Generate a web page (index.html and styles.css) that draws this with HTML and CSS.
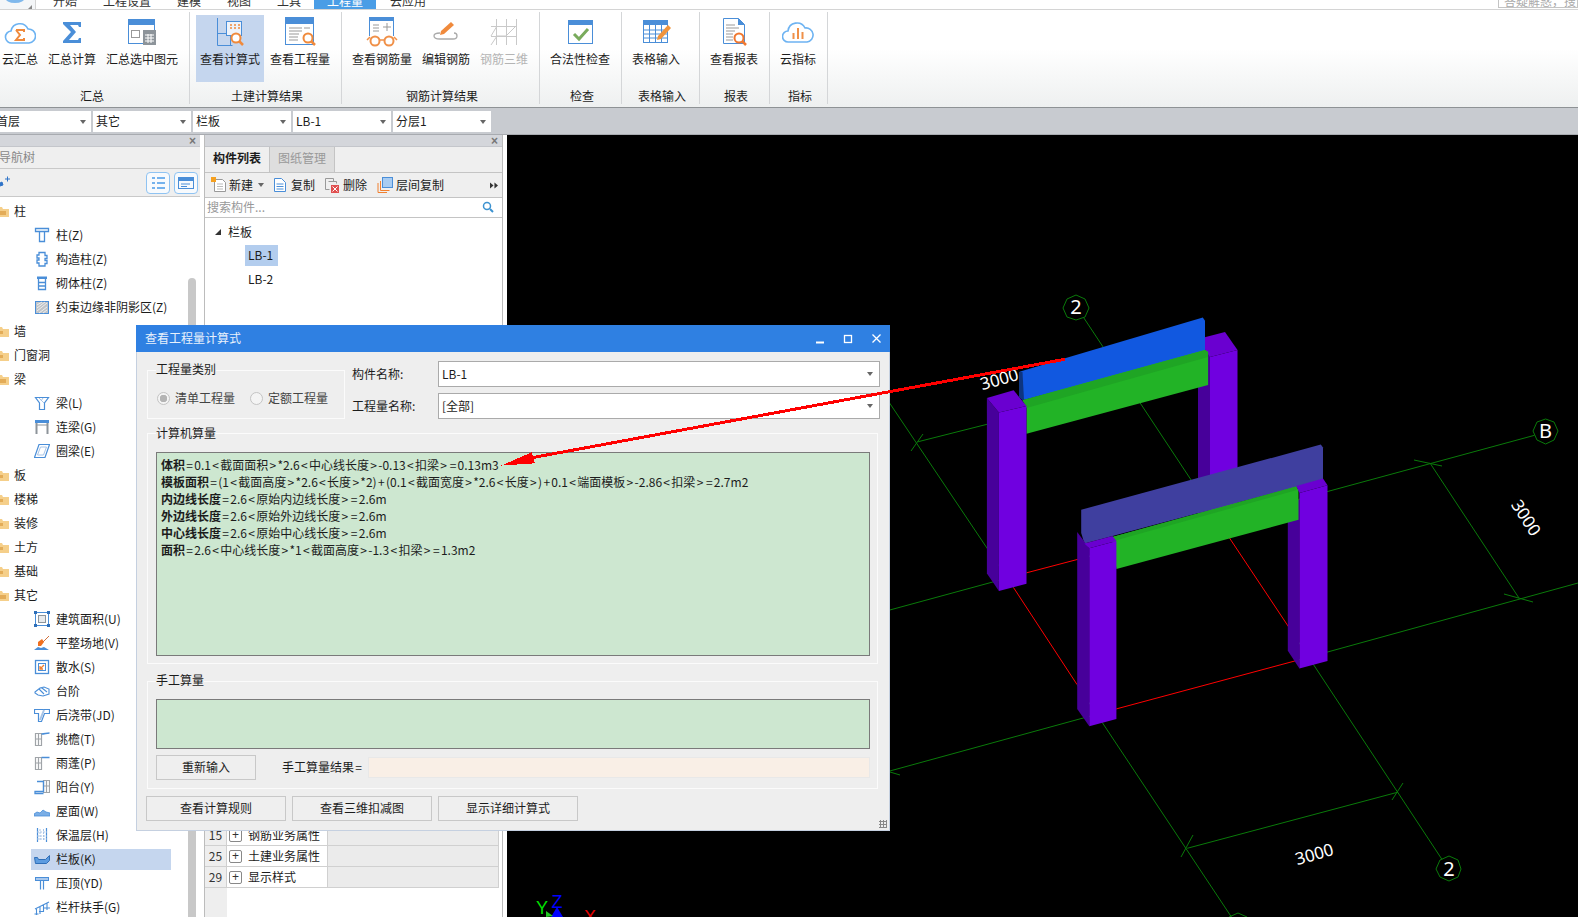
FILE: index.html
```html
<!DOCTYPE html>
<html lang="zh-CN">
<head>
<meta charset="utf-8">
<title>查看工程量计算式</title>
<link rel="stylesheet" href="styles.css">
</head>
<body>
<div class="app">
  <div class="tabbar">
    <div class="logo"><span class="logo-blob"></span><span class="logo-tri"></span></div>
    <span class="tab">开始</span><span class="tab">工程设置</span><span class="tab">建模</span><span class="tab">视图</span><span class="tab">工具</span><span class="tab tab-on">工程量</span><span class="tab">云应用</span>
    <span class="ask">答疑解惑，搜索</span>
  </div>

  <div class="ribbon">
    <section class="rgroup g1">
      <div class="rbtns">
        <div class="rbtn"><svg class="i32" viewBox="0 0 32 32"><path d="M8 27a6 6 0 0 1-1-12 9 9 0 0 1 17-2 7 7 0 0 1 1 14z" fill="#fff" stroke="#6db3f2" stroke-width="1.6"/><path d="M12 14h8v2M12 14l4 5-4 5h8v-2" fill="none" stroke="#f08a3c" stroke-width="2"/></svg><span>云汇总</span></div>
        <div class="rbtn"><svg class="i32" viewBox="0 0 32 32"><path d="M7 6h18v5h-2l-1-2H14l6 7-7 8h9l1-2h2v5H7v-2l8-9-8-8z" fill="#4a8ed8"/></svg><span>汇总计算</span></div>
        <div class="rbtn"><svg class="i32" viewBox="0 0 32 32"><rect x="2.500" y="3.500" width="26" height="24" fill="#fff" stroke="#4a8ed8"/><rect x="2" y="3" width="27" height="6" fill="#4a8ed8"/><rect x="5.500" y="14.500" width="8" height="7" fill="none" stroke="#999"/><rect x="17" y="14" width="13" height="15" fill="#8d949a"/><path d="M19 19h9M19 22h9M19 25h9M22 18v9M25 18v9" stroke="#fff"/></svg><span>汇总选中图元</span></div>
      </div>
      <div class="rlabel">汇总</div>
    </section>
    <section class="rgroup g2">
      <div class="rbtns">
        <div class="rbtn rbtn-on"><svg class="i32" viewBox="0 0 32 32"><path d="M3.500 2v27.500h15M3.500 17.500h13v12" fill="none" stroke="#4a8ed8"/><rect x="12.500" y="5.500" width="15" height="14" fill="#eef3fa" stroke="#4a8ed8"/><path d="M16 9h2M20 9h2M24 9h2M16 12h2M20 12h2M24 12h2" stroke="#f08a3c" stroke-width="1.500"/><circle cx="22" cy="22" r="4.500" fill="#fff" stroke="#f08a3c" stroke-width="2"/><path d="M25 25l4 4" stroke="#f08a3c" stroke-width="2.500"/></svg><span>查看计算式</span></div>
        <div class="rbtn"><svg class="i32" viewBox="0 0 32 32"><rect x="1.500" y="2.500" width="28" height="26" fill="#fff" stroke="#4a8ed8"/><rect x="1" y="1" width="29" height="7" fill="#4a8ed8"/><path d="M5 12h13M5 15h13M5 18h10M5 21h9M5 24h9M20 12h6" stroke="#999"/><circle cx="24" cy="22" r="4.500" fill="#fff" stroke="#f08a3c" stroke-width="2"/><path d="M27 25l4 4" stroke="#f08a3c" stroke-width="2.500"/></svg><span>查看工程量</span></div>
      </div>
      <div class="rlabel">土建计算结果</div>
    </section>
    <section class="rgroup g3">
      <div class="rbtns">
        <div class="rbtn"><svg class="i32" viewBox="0 0 32 32"><path d="M3.500 20V3.500h24V20" fill="#fff" stroke="#4a8ed8"/><rect x="3" y="1" width="25" height="4" fill="#4a8ed8"/><path d="M7 9h6M7 12h6M7 15h6M17 11h8M21 7v8" stroke="#999"/><circle cx="9" cy="25" r="4.500" fill="#fff" stroke="#f09048" stroke-width="2"/><circle cx="23" cy="25" r="4.500" fill="#fff" stroke="#f09048" stroke-width="2"/><path d="M13 24h6M1 24l3-3M31 24l-3-3" stroke="#f09048" stroke-width="1.500"/></svg><span>查看钢筋量</span></div>
        <div class="rbtn"><svg class="i32" viewBox="0 0 32 32"><path d="M11 15l10-9 3 3-10 9-4 1z" fill="#f08a3c"/><path d="M10 17c-4 0-6 1-6 3s2 3 6 3h13c2 0 4-1 4-3s-1-3-3-3" fill="none" stroke="#aaa" stroke-width="1.300"/></svg><span>编辑钢筋</span></div>
        <div class="rbtn rbtn-off"><svg class="i32" viewBox="0 0 32 32"><path d="M8.500 3v26M18.500 3v26M28.500 3v26M3 10.500h26M3 20.500h26M3 29l6-9 9 0 10-10M3 20l6-10" fill="none" stroke="#c9c9c9"/></svg><span>钢筋三维</span></div>
      </div>
      <div class="rlabel">钢筋计算结果</div>
    </section>
    <section class="rgroup g4">
      <div class="rbtns">
        <div class="rbtn"><svg class="i32" viewBox="0 0 32 32"><rect x="4.500" y="5.500" width="24" height="22" fill="#fff" stroke="#4a8ed8"/><rect x="4" y="4" width="25" height="5" fill="#4a8ed8"/><path d="M10 18l5 5 9-10" fill="none" stroke="#79ab5c" stroke-width="3"/></svg><span>合法性检查</span></div>
      </div>
      <div class="rlabel">检查</div>
    </section>
    <section class="rgroup g5">
      <div class="rbtns">
        <div class="rbtn"><svg class="i32" viewBox="0 0 32 32"><rect x="3.500" y="4.500" width="24" height="22" fill="#fff" stroke="#4a8ed8"/><rect x="3" y="4" width="25" height="5" fill="#4a8ed8"/><path d="M3 14h25M3 18h25M3 22h25M9.500 9v18M15.500 9v18M21.500 9v18" stroke="#4a8ed8"/><path d="M18 20l10-11 3 3-10 11-4 1z" fill="#f0943c"/></svg><span>表格输入</span></div>
      </div>
      <div class="rlabel">表格输入</div>
    </section>
    <section class="rgroup g6">
      <div class="rbtns">
        <div class="rbtn"><svg class="i32" viewBox="0 0 32 32"><path d="M5.500 2.500h15l6 6v19h-21z" fill="#fff" stroke="#4a8ed8"/><path d="M20 2l7 7h-7z" fill="#4a8ed8"/><path d="M8 9h9M8 12h13M8 15h9M8 18h7M8 21h7M8 24h7" stroke="#999"/><circle cx="21" cy="22" r="4.500" fill="#fff" stroke="#f07830" stroke-width="2"/><path d="M24 25l4 4" stroke="#f07830" stroke-width="2.500"/></svg><span>查看报表</span></div>
      </div>
      <div class="rlabel">报表</div>
    </section>
    <section class="rgroup g7">
      <div class="rbtns">
        <div class="rbtn"><svg class="i32" viewBox="0 0 32 32"><path d="M6 26a5.500 5.500 0 0 1 0-11 9 9 0 0 1 17-3 7 7 0 0 1 2 14z" fill="#fff" stroke="#6db3f2" stroke-width="1.600"/><path d="M11.500 17v6M16 12v11M20.500 16v7" stroke="#f09048" stroke-width="2"/></svg><span>云指标</span></div>
      </div>
      <div class="rlabel">指标</div>
    </section>
  </div>

  <div class="combobar">
    <div class="combo combo-first"><span>首层</span></div>
    <div class="combo"><span>其它</span></div>
    <div class="combo"><span>栏板</span></div>
    <div class="combo"><span>LB-1</span></div>
    <div class="combo"><span>分层1</span></div>
  </div>

  <div class="main">
    <aside class="nav">
      <div class="phead"><span class="pclose">×</span></div>
      <div class="nav-title"><span>导航树</span></div>
      <div class="nav-tools">
        <svg class="pin" viewBox="0 0 12 12"><path d="M0 8l4-2 1 3-3 1zM7 3h5M9.500 0.500v5" fill="#2f74c8" stroke="#2f74c8"/></svg>
        <span class="toolbtn"><svg class="i16" viewBox="0 0 16 16"><path d="M2 3h3M2 8h3M2 13h3M7 3h8M7 8h8M7 13h8" stroke="#4a9be8" stroke-width="1.500"/></svg></span>
        <span class="toolbtn"><svg class="i16" viewBox="0 0 16 16"><rect x="0.500" y="2.500" width="15" height="11" fill="none" stroke="#4a8ed8"/><rect x="0" y="2" width="16" height="4" fill="#4a8ed8"/><path d="M3 9h9M3 11.500h6" stroke="#4a8ed8"/></svg></span>
      </div>
      <div class="nav-tree">
        <div class="row l1"><svg class="folder" viewBox="0 0 12 11"><path d="M0 1h5l1 2h6v8H0z" fill="#f5cf8a"/><path d="M0 5h9v4H0z" fill="#e3ac58"/></svg><span>柱</span></div>
        <div class="row l2"><svg class="i16" viewBox="0 0 16 16"><path d="M1.500 1.500h13v3h-13zM5.500 4.500v10h5v-10" fill="none" stroke="#4a8ed8" stroke-width="1.300"/></svg><span>柱(Z)</span></div>
        <div class="row l2"><svg class="i16" viewBox="0 0 16 16"><path d="M5 1.500h6v3h2v3h-2v2h2v3h-2v2.500H5V12H3V9h2V7H3V4h2z" fill="none" stroke="#4a8ed8" stroke-width="1.300"/></svg><span>构造柱(Z)</span></div>
        <div class="row l2"><svg class="i16" viewBox="0 0 16 16"><path d="M3 1.500h10v2.500H3z" fill="#4a8ed8"/><path d="M4.500 4v10.500h7V4M4.500 7.500h7M4.500 11h7" fill="none" stroke="#4a8ed8" stroke-width="1.300"/></svg><span>砌体柱(Z)</span></div>
        <div class="row l2"><svg class="i16" viewBox="0 0 16 16"><rect x="1.500" y="2.500" width="13" height="12" fill="#c0c4c8" stroke="#4a8ed8"/><path d="M3 6l5-3M3 9l8-6M3 12l10-8M5 14l8-6M9 14l4-3" stroke="#eee"/></svg><span>约束边缘非阴影区(Z)</span></div>
        <div class="row l1"><svg class="folder" viewBox="0 0 12 11"><path d="M0 1h5l1 2h6v8H0z" fill="#f5cf8a"/><path d="M0 5h6v3H0z" fill="#e3ac58"/></svg><span>墙</span></div>
        <div class="row l1"><svg class="folder" viewBox="0 0 12 11"><path d="M0 1h5l1 2h6v8H0z" fill="#f5cf8a"/><path d="M0 5h6v3H0z" fill="#e3ac58"/></svg><span>门窗洞</span></div>
        <div class="row l1"><svg class="folder" viewBox="0 0 12 11"><path d="M0 1h5l1 2h6v8H0z" fill="#f5cf8a"/><path d="M0 5h9v4H0z" fill="#e3ac58"/></svg><span>梁</span></div>
        <div class="row l2"><svg class="i16" viewBox="0 0 16 16"><path d="M1.500 2.500h13l-4 5.500v6.500h-5V8z" fill="none" stroke="#4a8ed8" stroke-width="1.200"/><path d="M5 3l5 5M9 3l-2 3" stroke="#a8c4e6"/></svg><span>梁(L)</span></div>
        <div class="row l2"><svg class="i16" viewBox="0 0 16 16"><rect x="1" y="1" width="14" height="3" fill="#4a8ed8"/><path d="M2.500 4v11M13.500 4v11" stroke="#8d949a" stroke-width="2"/><path d="M2 6h12" stroke="#8d949a"/></svg><span>连梁(G)</span></div>
        <div class="row l2"><svg class="i16" viewBox="0 0 16 16"><path d="M5 1.500h10.500L11 14.500H0.500z" fill="none" stroke="#4a8ed8" stroke-width="1.200"/><path d="M6.500 4h6L9.500 12h-6z" fill="none" stroke="#a8c4e6"/></svg><span>圈梁(E)</span></div>
        <div class="row l1"><svg class="folder" viewBox="0 0 12 11"><path d="M0 1h5l1 2h6v8H0z" fill="#f5cf8a"/><path d="M0 5h6v3H0z" fill="#e3ac58"/></svg><span>板</span></div>
        <div class="row l1"><svg class="folder" viewBox="0 0 12 11"><path d="M0 1h5l1 2h6v8H0z" fill="#f5cf8a"/><path d="M0 5h6v3H0z" fill="#e3ac58"/></svg><span>楼梯</span></div>
        <div class="row l1"><svg class="folder" viewBox="0 0 12 11"><path d="M0 1h5l1 2h6v8H0z" fill="#f5cf8a"/><path d="M0 5h6v3H0z" fill="#e3ac58"/></svg><span>装修</span></div>
        <div class="row l1"><svg class="folder" viewBox="0 0 12 11"><path d="M0 1h5l1 2h6v8H0z" fill="#f5cf8a"/><path d="M0 5h6v3H0z" fill="#e3ac58"/></svg><span>土方</span></div>
        <div class="row l1"><svg class="folder" viewBox="0 0 12 11"><path d="M0 1h5l1 2h6v8H0z" fill="#f5cf8a"/><path d="M0 5h6v3H0z" fill="#e3ac58"/></svg><span>基础</span></div>
        <div class="row l1"><svg class="folder" viewBox="0 0 12 11"><path d="M0 1h5l1 2h6v8H0z" fill="#f5cf8a"/><path d="M0 5h9v4H0z" fill="#e3ac58"/></svg><span>其它</span></div>
        <div class="row l2"><svg class="i16" viewBox="0 0 16 16"><rect x="1.500" y="1.500" width="13" height="13" fill="none" stroke="#4a8ed8"/><rect x="4.500" y="4.500" width="7" height="7" fill="#e8eaec" stroke="#8d949a"/><path d="M0 0h3v3H0zM13 0h3v3h-3zM0 13h3v3H0zM13 13h3v3h-3z" fill="#2f6fb8"/></svg><span>建筑面积(U)</span></div>
        <div class="row l2"><svg class="i16" viewBox="0 0 16 16"><path d="M15 1L8 8" stroke="#d0703c"/><path d="M4 7l4-3 2 3-3 4-3 0z" fill="#f07020"/><path d="M0 15l4-3 3 1 3-1 5 3z" fill="#4a8ed8"/></svg><span>平整场地(V)</span></div>
        <div class="row l2"><svg class="i16" viewBox="0 0 16 16"><rect x="1.500" y="1.500" width="13" height="13" fill="none" stroke="#4a8ed8" stroke-width="1.300"/><rect x="4.500" y="4.500" width="7" height="7" fill="none" stroke="#4a8ed8"/><path d="M10 6L6 10M6 7v3h3" fill="none" stroke="#f08030" stroke-width="1.300"/></svg><span>散水(S)</span></div>
        <div class="row l2"><svg class="i16" viewBox="0 0 16 16"><path d="M1 9l5-4 4-1 5 2v5l-6 2-5-1-3-2zM5 6l5 5M8 5l5 4" fill="none" stroke="#4a8ed8" stroke-width="1.100"/></svg><span>台阶</span></div>
        <div class="row l2"><svg class="i16" viewBox="0 0 16 16"><path d="M0.500 2.500h15v4h-5l-3 8h-3V6.500H0.500z" fill="none" stroke="#4a8ed8" stroke-width="1.200"/><path d="M10 3L6 13" stroke="#a8c4e6" stroke-width="2"/></svg><span>后浇带(JD)</span></div>
        <div class="row l2"><svg class="i16" viewBox="0 0 16 16"><path d="M1.500 2.500h6v12h-6zM1.500 8h6M4.500 2.500v12" fill="none" stroke="#a0a4a8" stroke-width="1.200"/><path d="M7.500 3c3 0 5-1 8-1" fill="none" stroke="#4a8ed8" stroke-width="1.300"/></svg><span>挑檐(T)</span></div>
        <div class="row l2"><svg class="i16" viewBox="0 0 16 16"><path d="M1.500 2.500h6v12h-6zM1.500 8h6M4.500 2.500v12" fill="none" stroke="#a0a4a8" stroke-width="1.200"/><path d="M7.500 2.500h8" stroke="#4a8ed8" stroke-width="1.500"/></svg><span>雨蓬(P)</span></div>
        <div class="row l2"><svg class="i16" viewBox="0 0 16 16"><path d="M9.500 1.500h6v12h-6zM9.500 7h6M12.500 1.500v12" fill="none" stroke="#a0a4a8" stroke-width="1.200"/><path d="M3 2.500h6.500v10H1v2h8.500" fill="none" stroke="#4a8ed8" stroke-width="1.300"/></svg><span>阳台(Y)</span></div>
        <div class="row l2"><svg class="i16" viewBox="0 0 16 16"><path d="M0 11l3-2 3 1 3-3 3 2 4 1v3H0z" fill="#7aaee6" stroke="#4a8ed8" stroke-width=".8"/></svg><span>屋面(W)</span></div>
        <div class="row l2"><svg class="i16" viewBox="0 0 16 16"><path d="M3.500 1v14M12.500 1v14" stroke="#4a8ed8" stroke-width="1.200"/><path d="M6 2v12M9.500 2v12M3 5h10M3 9h10M3 12h10" stroke="#a8c4e6" stroke-dasharray="2 1"/></svg><span>保温层(H)</span></div>
        <div class="row l2 row-on"><svg class="i16" viewBox="0 0 16 16"><path d="M0.500 6.500h3l1 2h7l4-4v5l-3 3H1.500z" fill="#5c9ce0" stroke="#2f6fb8"/></svg><span>栏板(K)</span></div>
        <div class="row l2"><svg class="i16" viewBox="0 0 16 16"><rect x="1.500" y="2.500" width="13" height="3" fill="#a8c8ee" stroke="#4a8ed8"/><path d="M6.500 5.500v9M9.500 5.500v9" stroke="#4a8ed8" stroke-width="1.200"/></svg><span>压顶(YD)</span></div>
        <div class="row l2"><svg class="i16" viewBox="0 0 16 16"><path d="M1 10l14-7M2.500 10v6M6 8v7M9.500 6v7M13 4v7M0.500 15h4M5 12.500h5M10 9h6" fill="none" stroke="#4a8ed8" stroke-width="1.100"/></svg><span>栏杆扶手(G)</span></div>
        <span class="scroll"></span>
      </div>
    </aside>

    <section class="comp">
      <div class="phead"><span class="pclose">×</span></div>
      <div class="comp-tabs"><span class="ctab ctab-on">构件列表</span><span class="ctab">图纸管理</span></div>
      <div class="comp-tools">
        <span class="ct ct-new"><svg class="i16" viewBox="0 0 16 16"><path d="M3.500 2.500h8l3 3v9h-11z" fill="#fff" stroke="#999"/><path d="M6 7h6M6 9.500h6M6 12h6" stroke="#bbb"/><rect x="0" y="0" width="5" height="5" fill="#f5a020"/></svg><span>新建</span><i class="tri"></i></span>
        <span class="ct ct-copy"><svg class="i16" viewBox="0 0 16 16"><path d="M2.500 1.500h7l4 4v9h-11z" fill="#fff" stroke="#4a8ed8"/><path d="M4.500 7h7M4.500 9.500h7M4.500 12h7" stroke="#4a8ed8"/></svg><span>复制</span></span>
        <span class="ct ct-del"><svg class="i16" viewBox="0 0 16 16"><path d="M1.500 1.500h8v3M1.500 1.500v11h4M4.500 4.500h8v2" fill="none" stroke="#999"/><rect x="7" y="8" width="8" height="8" fill="#e05050"/><path d="M8.500 9.500l5 5M13.500 9.500l-5 5" stroke="#fff"/></svg><span>删除</span></span>
        <span class="ct ct-floor"><svg class="i16" viewBox="0 0 16 16"><rect x="5.500" y="0.500" width="10" height="10" fill="#a8ccf2" stroke="#4a8ed8"/><path d="M3.500 4v9.500h9M1 6v9.500h9" fill="none" stroke="#f08030"/></svg><span>层间复制</span></span>
        <svg class="more" viewBox="0 0 9 7"><path d="M0 0l4 3.500L0 7zM5 0l4 3.500L5 7z" fill="#333"/></svg>
      </div>
      <div class="comp-search"><span>搜索构件...</span><svg class="i12" viewBox="0 0 12 12"><circle cx="5" cy="5" r="3.500" fill="none" stroke="#3c92d0" stroke-width="1.500"/><path d="M8 8l3 3" stroke="#3c92d0" stroke-width="2"/></svg></div>
      <div class="comp-tree">
        <div class="ctree-root"><i class="expand"></i><span>栏板</span></div>
        <div class="ctree-item"><span class="item-on">LB-1</span></div>
        <div class="ctree-item"><span class="item">LB-2</span></div>
      </div>
      <div class="props">
        <div class="prow"><span class="pnum">15</span><span class="pname"><i class="plus">+</i>钢筋业务属性</span><span class="pval"></span></div>
        <div class="prow"><span class="pnum">25</span><span class="pname"><i class="plus">+</i>土建业务属性</span><span class="pval"></span></div>
        <div class="prow"><span class="pnum">29</span><span class="pname"><i class="plus">+</i>显示样式</span><span class="pval"></span></div>
        <div class="pfill"><span class="pstripe"></span></div>
      </div>
    </section>

    <div class="canvas">
      <svg class="scene" viewBox="507 135 1071 782">
        <g fill="none" stroke="#0a7a0a" stroke-width="1">
          <path d="M1083.500 317.400L1229.500 538M1288.700 627L1441.900 859.300"/>
          <path d="M888.900 402L1013.600 587.700M1077 684.500L1231.700 917.400"/>
          <path d="M917.800 441.800L987 424.300"/>
          <path d="M889.800 610L1027 572.700M1078 559.300L1534.500 435.300"/>
          <path d="M889.800 771L1116.400 708.900M1298.500 660L1578 583"/>
          <path d="M1187.200 848.300L1397.800 792.200"/>
          <path d="M1429.900 462.900L1518.900 597.900"/>
          <path d="M911 451L923 434M1414 460L1442 466M1504 594L1533 602M1181 857L1193 835M1392 800L1403 783M890 772L900 775"/>
          <polygon points="1076,295 1085,299 1089,308 1085,317 1076,320 1067,317 1063,308 1067,299"/>
          <polygon points="1545.600,419 1554,422 1558,431 1554,440 1545.600,444 1537,440 1533,431 1537,422"/>
          <polygon points="1449,856 1458,860 1461,869 1458,877 1449,881 1440,877 1436,869 1440,860"/>
          <polygon points="1238,913 1247,917 1250,926 1238,938 1226,926 1229,917"/>
        </g>
        <g fill="none" stroke="#ff0000" stroke-width="1">
          <path d="M1013.600 587.700L1077 684.500"/>
          <path d="M1229.500 538L1288.700 627"/>
          <path d="M1027 572.700L1078 559.300"/>
          <path d="M1116.400 708.900L1298.500 660"/>
        </g>
        <!-- back frame -->
        <polygon points="1198,339 1210,355 1210,520 1198,520" fill="#47009a"/>
        <polygon points="1210,357 1237.500,350 1237.500,520 1210,520" fill="#7000e0"/>
        <polygon points="1198,339 1225,332 1237.500,350 1210,357" fill="#6a00d0"/>
        <polygon points="1020.200,371.500 1202.800,317.400 1205,320.700 1205,352.400 1022.500,400.300" fill="#1158e0"/>
        <polygon points="1020.200,371.500 1022.500,372 1024,400 1022.500,400.300 1019,397 1019,372" fill="#0d3580"/>
        <polygon points="1022.500,400.300 1205,350 1208.100,352 1208.100,384.900 1026.500,433.700 1026.500,406" fill="#22b326"/>
        <polygon points="1022.500,400.300 1205,350 1208.100,352 1208,357 1026.500,408" fill="#1fa524"/>
        <polygon points="986.900,397.900 998.900,412.500 998.900,591 986.900,573.500" fill="#47009a"/>
        <polygon points="998.900,412.500 1026.500,406 1026.500,583.700 998.900,591" fill="#7000e0"/>
        <polygon points="986.900,397.900 1013.600,390.200 1026.500,406 998.900,412.500" fill="#6a00d0"/>
        <!-- front frame -->
        <polygon points="1287.800,500 1299.400,500 1299.400,668.600 1287.800,650.700" fill="#47009a"/>
        <polygon points="1081.200,509.700 1320.800,444.600 1323,447.500 1323,479.200 1296.300,487 1084.400,543.400 1081.200,533" fill="#3f3f9f"/>
        <polygon points="1112.400,536.900 1296.300,486.500 1298.500,490 1298.500,519.800 1116.400,569" fill="#22b326"/>
        <polygon points="1112.400,536.900 1296.300,486.500 1297,490 1113.500,541" fill="#1fa524"/>
        <polygon points="1077.200,532 1089.300,548.300 1089.300,726.300 1077.200,708.900" fill="#47009a"/>
        <polygon points="1089.300,548.300 1116.400,541 1116.400,719 1089.300,726.300" fill="#7000e0"/>
        <polygon points="1084.400,543.400 1112.400,536 1116.400,541 1089.300,548.300" fill="#6a00d0"/>
        <polygon points="1299.400,493 1327.500,485.300 1327.500,660.900 1299.400,668.600" fill="#7000e0"/>
        <polygon points="1296.300,486 1323,478.400 1327.500,485.300 1299.400,493" fill="#6a00d0"/>
        <g class="dim">
          <text x="1076" y="314" class="ax">2</text>
          <text x="1545.600" y="438" class="ax">B</text>
          <text x="1449" y="876" class="ax">2</text>
          <text transform="translate(1001 385) rotate(-16)">3000</text>
          <text transform="translate(1316 860) rotate(-16)">3000</text>
          <text transform="translate(1521 521) rotate(57)">3000</text>
        </g>
        <g class="gizmo">
          <text x="542" y="914" class="gy">Y</text>
          <text x="557" y="908" class="gz">Z</text>
          <text x="590" y="923" class="gx">X</text>
          <polygon points="557,907 563,917 551,917" fill="#0000ff"/>
          <polygon points="546,911 553,916 546,917" fill="#22c822"/>
        </g>
      </svg>
    </div>
  </div>

  <div class="dialog">
    <header class="dtitle">
      <span>查看工程量计算式</span>
      <svg class="dctl" viewBox="0 0 70 12"><path d="M0 9.500h8" stroke="#fff" stroke-width="2"/><rect x="28.500" y="2.500" width="7" height="7" fill="none" stroke="#fff" stroke-width="1.300"/><path d="M56.500 1.500l8 8M64.500 1.500l-8 8" stroke="#fff" stroke-width="1.300"/></svg>
    </header>
    <div class="dbody">
      <div class="dtop">
        <fieldset class="fs fs-type">
          <legend>工程量类别</legend>
          <div class="radios">
            <span class="radio radio-on"></span><span class="rtext">清单工程量</span>
            <span class="radio"></span><span class="rtext">定额工程量</span>
          </div>
        </fieldset>
        <div class="dform">
          <div class="frow"><label>构件名称:</label><div class="sel">LB-1<i class="tri"></i></div></div>
          <div class="frow"><label>工程量名称:</label><div class="sel">[全部]<i class="tri"></i></div></div>
        </div>
      </div>
      <fieldset class="fs fs-calc">
        <legend>计算机算量</legend>
        <div class="formula">
          <p><b>体积</b><i class="op">=</i>0.1<i class="op">&lt;</i>截面面积<i class="op">&gt;</i>*2.6<i class="op">&lt;</i>中心线长度<i class="op">&gt;</i>-0.13<i class="op">&lt;</i>扣梁<i class="op">&gt;</i><i class="op">=</i>0.13m3</p>
          <p><b>模板面积</b><i class="op">=</i>(1<i class="op">&lt;</i>截面高度<i class="op">&gt;</i>*2.6<i class="op">&lt;</i>长度<i class="op">&gt;</i>*2)<i class="op">+</i>(0.1<i class="op">&lt;</i>截面宽度<i class="op">&gt;</i>*2.6<i class="op">&lt;</i>长度<i class="op">&gt;</i>)<i class="op">+</i>0.1<i class="op">&lt;</i>端面模板<i class="op">&gt;</i>-2.86<i class="op">&lt;</i>扣梁<i class="op">&gt;</i><i class="op">=</i>2.7m2</p>
          <p><b>内边线长度</b><i class="op">=</i>2.6<i class="op">&lt;</i>原始内边线长度<i class="op">&gt;</i><i class="op">=</i>2.6m</p>
          <p><b>外边线长度</b><i class="op">=</i>2.6<i class="op">&lt;</i>原始外边线长度<i class="op">&gt;</i><i class="op">=</i>2.6m</p>
          <p><b>中心线长度</b><i class="op">=</i>2.6<i class="op">&lt;</i>原始中心线长度<i class="op">&gt;</i><i class="op">=</i>2.6m</p>
          <p><b>面积</b><i class="op">=</i>2.6<i class="op">&lt;</i>中心线长度<i class="op">&gt;</i>*1<i class="op">&lt;</i>截面高度<i class="op">&gt;</i>-1.3<i class="op">&lt;</i>扣梁<i class="op">&gt;</i><i class="op">=</i>1.3m2</p>
        </div>
      </fieldset>
      <fieldset class="fs fs-hand">
        <legend>手工算量</legend>
        <div class="handbox"></div>
        <div class="handrow">
          <span class="btn btn-re">重新输入</span>
          <span class="handlabel">手工算量结果<i class="op">=</i></span>
          <span class="handres"></span>
        </div>
      </fieldset>
      <div class="dbtns">
        <span class="btn">查看计算规则</span>
        <span class="btn">查看三维扣减图</span>
        <span class="btn">显示详细计算式</span>
      </div>
      <span class="grip"></span>
    </div>
  </div>

  <svg class="arrow" viewBox="0 0 1578 917" shape-rendering="crispEdges">
    <path d="M1064.800 359.300L533 457.500" stroke="#ff0000" stroke-width="3" fill="none"/>
    <polygon points="501.500,465.500 531.700,452.300 535,463.300" fill="#ff0000"/>
  </svg>
</div>
</body>
</html>
```
FILE: styles.css
```css
* { box-sizing: border-box; }
html, body { margin: 0; padding: 0; background: #fff; }
body { font: 12px/16px "Noto Sans CJK SC", "Noto Sans", sans-serif; color: #1c1c1c; }
i { font-style: normal; }
svg { display: block; flex: none; }
.i32 { width: 32px; height: 32px; }
.i16 { width: 16px; height: 16px; }
.i12 { width: 12px; height: 12px; }

.app { position: relative; width: 1578px; height: 917px; overflow: hidden; display: flex; flex-direction: column; }

/* title tabs, cut by the top edge */
.tabbar { flex: none; height: 10px; display: flex; border-bottom: 1px solid #d4d4d4; overflow: hidden; background: #fff; }
.logo { position: relative; flex: none; width: 36px; height: 10px; margin-right: 4px; border-right: 1px solid #d4d4d4; background: #f4f6f8; }
.logo-blob { position: absolute; left: 5px; top: -8px; width: 20px; height: 11px; border-radius: 50%; background: #7fb8ec; }
.logo-tri { position: absolute; right: 3px; bottom: 1px; border: 2px solid transparent; border-right-color: #888; border-bottom-color: #888; }
.tab { flex: none; padding: 0 13px; height: 9px; line-height: 2px; overflow: hidden; color: #333; }
.tab-on { background: #4a9de6; color: #fff; margin-right: 1px; }
.ask { margin-left: auto; width: 80px; height: 8px; line-height: 0; padding: 1px 0 0 5px; border: 1px solid #c4c4c4; border-top: 0; color: #aaa; overflow: hidden; white-space: nowrap; }

/* ribbon */
.ribbon { flex: none; height: 97px; display: flex; background: linear-gradient(#fff 0%, #fff 40%, #eef0f0 100%); }
.rgroup { flex: none; height: 92px; margin-top: 2px; padding: 3px 0 0 5px; border-right: 1px solid #d4d6d8; display: flex; flex-direction: column; }
.g1 { width: 197px; margin-left: -7px; padding-left: 4px; }
.g2 { width: 152px; }
.g3 { width: 198px; }
.g4 { width: 82px; }
.g5 { width: 78px; }
.g6 { width: 70px; }
.g7 { width: 58px; }
.rbtns { display: flex; height: 67px; }
.rbtn { flex: none; display: flex; flex-direction: column; align-items: center; padding: 1px 4px 0; margin: 0 1px; white-space: nowrap; }
.rbtn svg { margin-bottom: 3px; }
.rbtn-on { background: #c5d6ee; }
.rbtn-off { color: #b4b4b4; }
.rlabel { margin: 6px 0 0 -2px; text-align: center; }

/* selector bar */
.combobar { flex: none; height: 28px; display: flex; gap: 2px; padding-top: 3px; background: #c8cbd0; border-top: 1px solid #8e9295; border-bottom: 1px solid #a8abb0; }
.combo { position: relative; flex: none; width: 98px; height: 21px; padding-left: 3px; line-height: 19px; background: #fff; overflow: hidden; }
.combo::after { content: ""; position: absolute; right: 5px; top: 9px; border: 3px solid transparent; border-top: 4px solid #666; border-bottom: 0; }
.combo-first { width: 91px; padding-left: 0; }
.combo-first span { margin-left: -4px; }

.main { flex: 1; min-height: 0; display: flex; gap: 4px; }

/* panels */
.phead { flex: none; position: relative; height: 12px; background: #d4d6db; border-bottom: 1px solid #c4c6cb; }
.pclose { position: absolute; right: 4px; top: -2px; color: #777; font: bold 12px/16px "Liberation Sans", sans-serif; }

.nav { flex: none; width: 200px; display: flex; flex-direction: column; background: #fff; }
.nav-title { flex: none; height: 22px; line-height: 19px; background: #efefef; border-bottom: 1px solid #c9c9c9; color: #888; overflow: hidden; }
.nav-title span { margin-left: -1px; }
.nav-tools { flex: none; height: 28px; display: flex; align-items: center; gap: 4px; padding-right: 2px; background: #efefef; border-bottom: 1px solid #c9c9c9; }
.pin { width: 12px; height: 12px; margin: -2px auto 0 -2px; }
.toolbtn { width: 24px; height: 22px; display: flex; align-items: center; justify-content: center; border: 1px solid #8fc3f2; border-radius: 4px; background: #f7fafd; }
.nav-tree { position: relative; flex: 1; min-height: 0; padding-top: 2px; overflow: hidden; }
.row { height: 24px; display: flex; align-items: center; white-space: nowrap; }
.l2 { padding-left: 34px; gap: 6px; }
.folder { width: 12px; height: 11px; margin-left: -3px; margin-right: 5px; }
.row-on { position: relative; z-index: 0; }
.row-on::before { content: ""; position: absolute; z-index: -1; left: 31px; top: 2px; width: 140px; height: 21px; background: #c5d6ee; }
.scroll { position: absolute; left: 188px; top: 81px; width: 8px; height: 700px; border-radius: 4px 4px 0 0; background: #c8c8c8; }

.comp { flex: none; width: 299px; display: flex; flex-direction: column; border: 1px solid #bcbcbc; border-width: 0 1px; background: #fff; }
.comp-tabs { flex: none; height: 26px; display: flex; background: #efefef; border-bottom: 1px solid #c4c4c4; }
.ctab { width: 65px; text-align: center; line-height: 22px; color: #999; background: #dedede; border-right: 1px solid #c4c4c4; }
.ctab-on { background: #efefef; color: #1c1c1c; font-weight: 700; }
.comp-tools { position: relative; flex: none; height: 25px; display: flex; align-items: center; background: #efefef; border-bottom: 1px solid #c4c4c4; padding-left: 6px; }
.ct { display: flex; align-items: center; gap: 2px; }
.ct > span { margin-top: -1px; }
.ct-new { width: 61px; }
.ct-copy { width: 52px; gap: 3px; }
.ct-del { width: 53px; gap: 3px; }
.ct-floor { gap: 3px; }
.tri { display: inline-block; border: 3px solid transparent; border-top: 4px solid #666; border-bottom: 0; }
.ct-new .tri { margin-left: 3px; }
.more { position: absolute; right: 4px; top: 9px; width: 8px; height: 7px; }
.comp-search { flex: none; height: 20px; display: flex; align-items: center; justify-content: space-between; padding: 0 8px 2px 2px; color: #999; border-bottom: 1px solid #c4c4c4; }
.comp-tree { flex: none; height: 607px; overflow: hidden; padding-top: 2px; }
.ctree-root { display: flex; align-items: center; height: 23px; padding-left: 10px; }
.expand { width: 0; height: 0; border-style: solid; border-width: 0 0 6px 6px; border-color: transparent transparent #333 transparent; margin-right: 7px; }
.ctree-item { height: 24px; padding-left: 40px; display: flex; align-items: center; }
.item, .item-on { padding: 0 3px; line-height: 20px; height: 21px; width: 33px; white-space: nowrap; }
.item-on { background: #b3cdee; }
.props { flex: 1; min-height: 0; display: flex; flex-direction: column; }
.prow { flex: none; height: 21px; display: flex; border-bottom: 1px solid #d0d0d0; margin-right: 3px; line-height: 20px; }
.pnum { width: 22px; text-align: center; background: #eee; border-right: 1px solid #d0d0d0; color: #333; }
.pname { width: 101px; padding-left: 2px; display: flex; align-items: center; gap: 6px; border-right: 1px solid #d0d0d0; white-space: nowrap; }
.plus { width: 13px; height: 13px; flex: none; border: 1px solid #888; border-radius: 2px; font: 12px/11px "Liberation Sans", sans-serif; text-align: center; color: #333; }
.pval { flex: 1; background: #ebebeb; border-right: 1px solid #d0d0d0; }
.pfill { flex: 1; }
.pstripe { display: block; width: 22px; height: 100%; background: #eee; }

/* 3D view */
.canvas { flex: 1; min-width: 0; background: #000; }
.scene { width: 1071px; height: 782px; }
.dim text { fill: #fff; font: 17px "Noto Sans", sans-serif; text-anchor: middle; }
.dim text.ax { font-size: 20px; }
.gizmo text { font: 18px "Liberation Sans", sans-serif; text-anchor: middle; }
.gy { fill: #00e000; }
.gz { fill: #0000ff; }
.gx { fill: #e00000; }

/* dialog */
.dialog { position: absolute; left: 136px; top: 325px; width: 754px; height: 506px; display: flex; flex-direction: column; border: 1px solid #c5d0e0; border-top: 0; background: #eee; }
.dtitle { flex: none; height: 27px; margin: 0 -1px; display: flex; align-items: center; justify-content: space-between; padding: 0 4px 2px 9px; background: #2f80e2; color: #e8f1fc; }
.dctl { width: 70px; height: 12px; margin-top: 2px; }
.dbody { position: relative; flex: 1; padding: 0 0 0 10px; }
.dtop { display: flex; margin-top: 9px; height: 58px; }
.fs { margin: 0; padding: 0 7px 0 8px; border: 1px solid #fbfbfb; min-width: 0; }
.fs legend { padding: 0; height: 16px; line-height: 16px; color: #1c1c1c; }
.fs-type legend, .fs-hand legend { line-height: 14px; }
.fs-type { flex: none; width: 198px; height: 57px; margin-top: 1px; }
.radios { display: flex; align-items: center; margin-top: 12px; margin-left: 1px; }
.radio { width: 13px; height: 13px; border-radius: 50%; border: 1px solid #c4c4c4; background: #f4f4f4; flex: none; }
.radio-on { background: radial-gradient(circle, #b4b4b4 0 3.500px, #f4f4f4 4px); }
.rtext { color: #444; margin-left: 5px; margin-right: 15px; white-space: nowrap; }
.dform { margin-left: 7px; display: flex; flex-direction: column; gap: 6px; }
.frow { display: flex; height: 26px; align-items: center; }
.frow label { width: 86px; }
.sel { position: relative; width: 442px; height: 26px; padding-left: 3px; line-height: 24px; background: #fff; border: 1px solid #aaa; }
.sel .tri { position: absolute; right: 6px; top: 10px; }
.fs-calc { width: 731px; height: 239px; margin-top: 6px; }
.formula { margin-top: 11px; height: 204px; padding: 3px 4px; background: #cde7d0; border: 1px solid #7a7a7a; }
.formula p { margin: 0; line-height: 17px; white-space: nowrap; }
.formula b { font-weight: 700; }
.op { padding: 0 1.3px; }
.fs-hand { width: 731px; height: 116px; margin-top: 9px; }
.handbox { margin-top: 10px; height: 50px; background: #cde7d0; border: 1px solid #7a7a7a; }
.handrow { display: flex; align-items: center; margin-top: 6px; }
.btn { flex: none; width: 140px; height: 25px; line-height: 22px; text-align: center; border: 1px solid #c8c8c8; background: #efefef; }
.btn-re { width: 100px; }
.handlabel { margin-left: 26px; width: 86px; white-space: nowrap; padding-bottom: 2px; }
.handres { width: 502px; height: 21px; background: #f9efe6; border: 1px solid #e8e8e8; }
.dbtns { display: flex; gap: 6px; margin: 7px 0 0 -1px; }
.grip { position: absolute; right: 2px; bottom: 2px; width: 8px; height: 8px; background: radial-gradient(circle, #888 0 1px, transparent 1.200px) 0 0 / 3px 3px; }

.arrow { position: absolute; left: 0; top: 0; width: 1578px; height: 917px; pointer-events: none; }
```
